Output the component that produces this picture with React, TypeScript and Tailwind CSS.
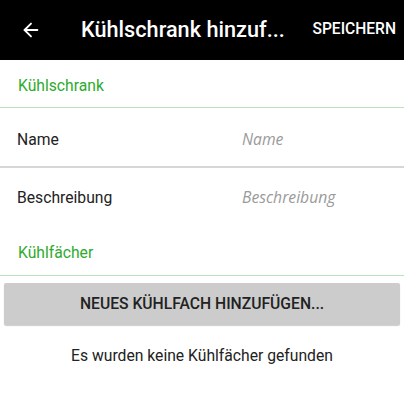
import { ArrowLeft } from "lucide-react";

export default function App() {
  return (
    <div className="h-[400px] w-[404px] overflow-hidden bg-white font-['Roboto',sans-serif]">
      <header className="flex h-[60px] items-center bg-black text-white">
        <button className="flex w-[62px] items-center pl-[20px]">
          <ArrowLeft size={22} strokeWidth={2} />
        </button>
        <h1 className="ml-[19px] text-[21.7px] font-medium">Kühlschrank hinzuf...</h1>
        <span className="ml-auto pr-[8px] text-[15.6px] font-medium">SPEICHERN</span>
      </header>

      <div className="flex h-[48px] items-center border-b border-[#b9e2bb] px-[18px] pt-[5px] text-[15.7px] text-[#2eaa2e]">
        Kühlschrank
      </div>

      <div className="flex h-[60px] items-center border-b-2 border-[#d6d6d6] pl-[17px] pt-[5px] text-[15.7px] text-[#222]">
        <span>Name</span>
        <span className="ml-auto w-[162px] font-['Open_Sans',sans-serif] text-[15.7px] italic text-[#9a9a9a]">Name</span>
      </div>

      <div className="flex h-[58px] items-center pl-[17px] pt-[1px] text-[15.7px] text-[#222]">
        <span>Beschreibung</span>
        <span className="ml-auto w-[162px] font-['Open_Sans',sans-serif] text-[15.7px] italic text-[#9a9a9a]">Beschreibung</span>
      </div>

      <div className="flex h-[50px] items-center border-b border-[#b9e2bb] px-[18px] pt-[4px] text-[15.7px] text-[#2eaa2e]">
        Kühlfächer
      </div>

      <div className="px-[4px] pt-[7px]">
        <button className="flex h-[42px] w-full items-center justify-center rounded-[2px] bg-[#cccccc] text-[15.7px] font-medium text-[#222] shadow-[0_1px_1px_rgba(0,0,0,0.2)]">
          NEUES KÜHLFACH HINZUFÜGEN...
        </button>
      </div>

      <p className="mt-[19px] text-center text-[15.7px] text-[#222]">Es wurden keine Kühlfächer gefunden</p>
    </div>
  );
}
